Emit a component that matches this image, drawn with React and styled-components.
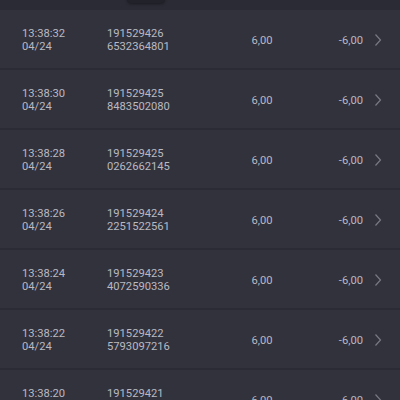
import React from 'react'
import styled, { createGlobalStyle } from 'styled-components'

const GlobalStyle = createGlobalStyle`
  html, body {
    margin: 0;
    padding: 0;
    background: #2b2b35;
    font-family: Roboto, "Noto Sans", sans-serif;
  }
`

const rows = [
  { time: '13:38:32', date: '04/24', id1: '191529426', id2: '6532364801' },
  { time: '13:38:30', date: '04/24', id1: '191529425', id2: '8483502080' },
  { time: '13:38:28', date: '04/24', id1: '191529425', id2: '0262662145' },
  { time: '13:38:26', date: '04/24', id1: '191529424', id2: '2251522561' },
  { time: '13:38:24', date: '04/24', id1: '191529423', id2: '4072590336' },
  { time: '13:38:22', date: '04/24', id1: '191529422', id2: '5793097216' },
  { time: '13:38:20', date: '04/24', id1: '191529421', id2: '3513604096' },
]

const Chevron = () => (
  <svg width='8' height='14' viewBox='0 0 8 14' fill='none'>
    <path d='M1.5 1.5 L6.5 7 L1.5 12.5' stroke='#7a7a84' strokeWidth='1.2' />
  </svg>
)

const App = () => {
  return (
    <Page>
      <GlobalStyle />
      <TopBar>
        <Handle />
      </TopBar>
      <List>
        {rows.map((r, i) => (
          <Row key={i}>
            <Cell>
              <span>{r.time}</span>
              <span>{r.date}</span>
            </Cell>
            <Cell>
              <span>{r.id1}</span>
              <span>{r.id2}</span>
            </Cell>
            <Amount align='center'>6,00</Amount>
            <Amount align='right'>-6,00</Amount>
            <Arrow><Chevron /></Arrow>
          </Row>
        ))}
      </List>
    </Page>
  )
}

const Page = styled.div`
  width: 400px;
  height: 400px;
  overflow: hidden;
  background: #2b2b35;
`

const TopBar = styled.div`
  height: 10px;
  position: relative;
`

const Handle = styled.div`
  position: absolute;
  left: 127px;
  top: -6px;
  width: 38px;
  height: 9px;
  border-radius: 5px;
  background: #22222a;
  box-shadow: 0 1px 3px rgba(0, 0, 0, 0.4);
`

const List = styled.div`
  display: flex;
  flex-direction: column;
  gap: 2px;
`

const Row = styled.div`
  box-sizing: border-box;
  height: 58px;
  background: #32323d;
  display: grid;
  grid-template-columns: 85px 125px 60px 71px 19px;
  align-items: center;
  padding: 2px 18px 0 22px;
  color: #b9b9c1;
  font-size: 11.2px;
  line-height: 13px;
`

const Cell = styled.div`
  display: flex;
  flex-direction: column;
`

const Amount = styled.div`
  text-align: ${p => p.align};
`

const Arrow = styled.div`
  display: flex;
  justify-content: flex-end;
`

export default App
